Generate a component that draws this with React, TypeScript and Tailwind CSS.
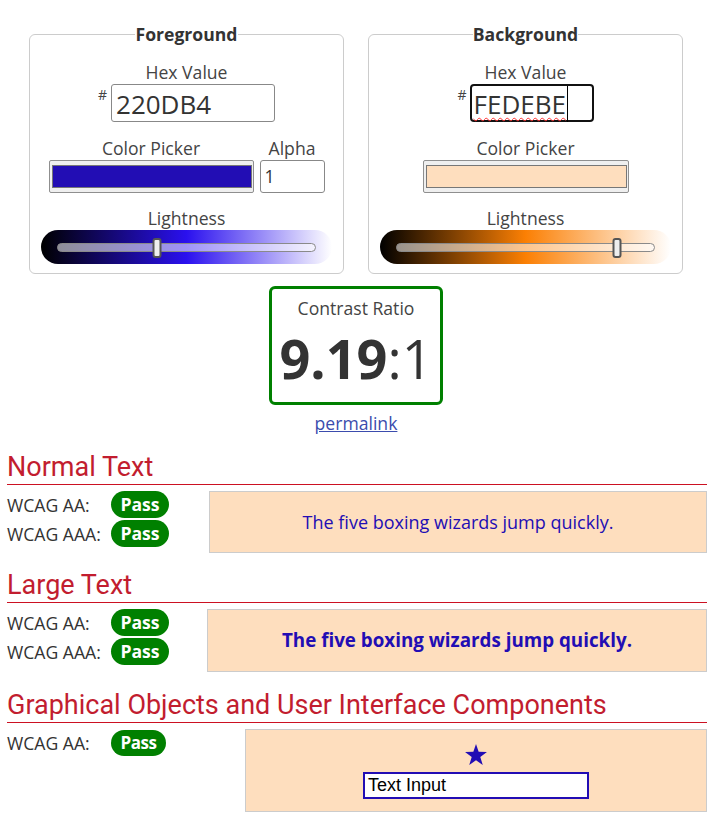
import React from "react";

const FG = "#220DB4";

function Pill({ small }: { small?: boolean }) {
  return (
    <span
      className={`flex items-center justify-center rounded-full bg-[#008000] font-bold text-white ${
        small ? "h-[26px] w-[55px] text-[17px] tracking-[-0.5px]" : "h-[27px] w-[58px] text-[17.6px]"
      }`}
    >
      Pass
    </span>
  );
}

function Row({ label, small }: { label: string; small?: boolean }) {
  return (
    <div className="flex items-center">
      <span className="w-[104px] text-[17.6px] leading-[24px] text-[#333]">{label}</span>
      <Pill small={small} />
    </div>
  );
}

function Heading({ children }: { children: React.ReactNode }) {
  return (
    <h2 className="border-b border-solid border-b-[#cc1122] font-['Roboto',sans-serif] text-[27px] leading-[33px] text-[#c21d2f]">
      {children}
    </h2>
  );
}

function Lightness({ track, pos }: { track: string; pos: number }) {
  return (
    <div className={`mx-[11px] h-[34px] rounded-full px-[16px] pt-[13px] ${track}`}>
      <div className="relative h-[9px] rounded-full border border-[#8a8a8a] bg-white/55">
        <div
          className="absolute top-[-6px] h-[20px] w-[9px] -translate-x-1/2 rounded-[3px] border-2 border-[#555] bg-[#eee]"
          style={{ left: `${pos}%` }}
        />
      </div>
    </div>
  );
}

function Swatch({ color, width }: { color: string; width: string }) {
  return (
    <div className={`h-[33px] rounded-[2px] border border-[#8f8f8f] bg-[#efefef] py-[4px] pl-[2px] pr-[1px] ${width}`}>
      <div className={`h-full border border-[#777] ${color}`} />
    </div>
  );
}

export default function App() {
  return (
    <div className="min-h-screen bg-white font-['Open_Sans',sans-serif] text-[#333]">
      <div className="w-[712px] pt-[22px]">
        <div className="flex justify-center gap-[24px]">
          <fieldset className="w-[315px] rounded-[6px] border border-[#ccc] pb-[9px]">
            <legend className="mx-auto px-0 text-[17.6px] font-bold leading-[24px] text-[#333]">Foreground</legend>
            <div className="mt-[14px] text-center text-[17.6px] leading-[24px] text-[#444]">Hex Value</div>
            <div className="flex justify-center">
              <span className="mr-[4px] mt-[3px] text-[14px] leading-[16px] text-[#444]">#</span>
              <div className="h-[38px] w-[164px] rounded-[3px] border border-[#888] pl-[4px] pt-[1px] text-[26px] leading-[36px] text-[#333]">
                220DB4
              </div>
            </div>
            <div className="mt-[14px] flex justify-center gap-[6px]">
              <div className="flex flex-col items-center">
                <span className="text-[17.6px] leading-[24px] text-[#444]">Color Picker</span>
                <Swatch color="bg-[#220DB4]" width="w-[205px]" />
              </div>
              <div className="flex flex-col items-center">
                <span className="text-[17.6px] leading-[24px] text-[#444]">Alpha</span>
                <div className="h-[33px] w-[65px] rounded-[3px] border border-[#888] pl-[4px] text-[17.6px] leading-[31px] text-[#333]">
                  1
                </div>
              </div>
            </div>
            <div className="mt-[13px] text-center text-[17.6px] leading-[24px] text-[#444]">Lightness</div>
            <Lightness track="bg-[linear-gradient(to_right,#000,hsl(247,87%,50%),#fff)]" pos={38.5} />
          </fieldset>

          <fieldset className="w-[315px] rounded-[6px] border border-[#ccc] pb-[9px]">
            <legend className="mx-auto px-0 text-[17.6px] font-bold leading-[24px] text-[#333]">Background</legend>
            <div className="mt-[14px] text-center text-[17.6px] leading-[24px] text-[#444]">Hex Value</div>
            <div className="flex justify-center">
              <span className="mr-[3px] mt-[3px] text-[14px] leading-[16px] text-[#444]">#</span>
              <div className="flex h-[38px] w-[124px] items-start rounded-[4px] border-2 border-[#111] pl-[2px] pt-[1px] text-[26px] leading-[34px] text-[#333]">
                <span className="underline decoration-[#f33] decoration-wavy decoration-[1px] underline-offset-[3px]">FEDEBE</span>
                <span className="ml-[1px] mt-[-1px] h-[36px] w-px bg-black" />
              </div>
            </div>
            <div className="mt-[14px] flex flex-col items-center">
              <span className="text-[17.6px] leading-[24px] text-[#444]">Color Picker</span>
              <Swatch color="bg-[#FEDEBE]" width="w-[206px]" />
            </div>
            <div className="mt-[13px] text-center text-[17.6px] leading-[24px] text-[#444]">Lightness</div>
            <Lightness track="bg-[linear-gradient(to_right,#000,hsl(30,97%,50%),#fff)]" pos={85.5} />
          </fieldset>
        </div>

        <div className="mx-auto mt-[12px] flex h-[119px] w-[174px] flex-col items-center rounded-[6px] border-[3px] border-[#008000] pt-[7px]">
          <span className="text-[17.6px] leading-[24px] text-[#444]">Contrast Ratio</span>
          <span className="mt-[11px] text-[54px] leading-[54px] text-[#333]">
            <b>9.19</b>:1
          </span>
        </div>
        <div className="mt-[6px] text-center text-[17.6px] leading-[24px]">
          <a href="#" className="text-[#3b4cad] underline">
            permalink
          </a>
        </div>
      </div>

      <div className="mt-[16px] pl-[7px] pr-[8px]">
        <Heading>Normal Text</Heading>
        <div className="mt-[6px] flex items-start">
          <div className="flex w-[202px] flex-col gap-[2px]">
            <Row label="WCAG AA:" />
            <Row label="WCAG AAA:" />
          </div>
          <div className="flex h-[62px] flex-1 items-center justify-center border border-[#ccc] bg-[#FEDEBE] text-[18px] text-[#220DB4]">
            The five boxing wizards jump quickly.
          </div>
        </div>

        <div className="mt-[16px]">
          <Heading>Large Text</Heading>
        </div>
        <div className="mt-[6px] flex items-start">
          <div className="flex w-[200px] flex-col gap-[2px]">
            <Row label="WCAG AA:" />
            <Row label="WCAG AAA:" />
          </div>
          <div className="flex h-[63px] flex-1 items-center justify-center border border-[#ccc] bg-[#FEDEBE] text-[18.8px] font-bold text-[#220DB4]">
            The five boxing wizards jump quickly.
          </div>
        </div>

        <div className="mt-[17px]">
          <Heading>Graphical Objects and User Interface Components</Heading>
        </div>
        <div className="mt-[6px] flex items-start">
          <div className="w-[238px] pt-[1px]">
            <Row label="WCAG AA:" small />
          </div>
          <div className="flex h-[83px] flex-1 flex-col items-center border border-[#ccc] bg-[#FEDEBE] pt-[14px]">
            <svg width="22" height="21" viewBox="0 0 24 23" className="mr-[1px]">
              <polygon
                points="12,0 14.9,8.6 24,8.8 16.7,14.3 19.4,23 12,17.8 4.6,23 7.3,14.3 0,8.8 9.1,8.6"
                fill={FG}
              />
            </svg>
            <div className="mt-[7px] h-[27px] w-[226px] border-2 border-[#220DB4] bg-white pl-[3px] font-['Liberation_Sans',sans-serif] text-[18px] leading-[23px] text-black">
              Text Input
            </div>
          </div>
        </div>
      </div>
    </div>
  );
}
